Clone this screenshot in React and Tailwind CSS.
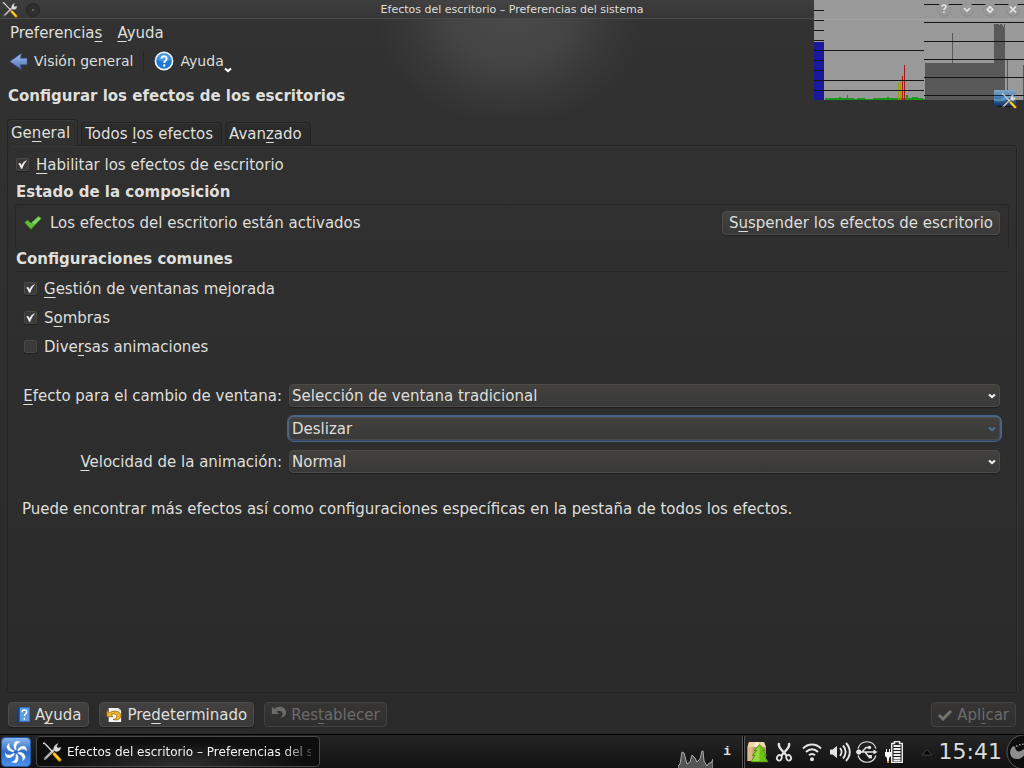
import React from "react";

const U = ({ children }) => (
  <span className="underline decoration-1 underline-offset-3 [text-decoration-skip-ink:none]">{children}</span>
);

const buttonFace =
  "flex items-center rounded-[4px] border border-[#4d4c4b] bg-linear-to-b from-[#42413f] to-[#393939] shadow-[0_1px_1px_rgba(0,0,0,0.35)]";
const buttonOff =
  "flex items-center rounded-[4px] border border-[#434241] bg-linear-to-b from-[#363534] to-[#302f2f] text-[#6b6b6a]";

function Tools({ className }) {
  return (
    <svg viewBox="0 0 20 20" className={className} aria-hidden="true">
      <path d="M3 16.6 12.3 7.3" stroke="#2b2b2b" strokeWidth="3.4" strokeLinecap="round" />
      <path d="M3 16.8 12.5 7.4" stroke="#b9b9b9" strokeWidth="2.2" strokeLinecap="round" />
      <path d="M12.2 8.6c-1.300-3 .6-6.400 4-7l-1.500 2.600 1.300 1.700 2.800-.8c.2 3.200-2.700 5.200-5.300 4.400z" fill="#dcdcdc" stroke="#777" strokeWidth=".4" />
      <circle cx="3" cy="16.800" r=".8" fill="#555" />
      <path d="M1 1.600 2.200 1l2.500 2.500 6.500 7" fill="none" stroke="#d8d8d8" strokeWidth="1.400" />
      <path d="m12.200 12 5.500 5.900" stroke="#a86c00" strokeWidth="3.600" strokeLinecap="round" />
      <path d="m12.200 12 5.300 5.600" stroke="#ffca17" strokeWidth="2.400" strokeLinecap="round" />
      <path d="m12.600 11.700 4 4.200" stroke="#fff08a" strokeWidth=".6" />
    </svg>
  );
}

function Chevron({ className }) {
  return (
    <svg viewBox="0 0 8 6" className={className} aria-hidden="true">
      <path d="M1 1.500 4 4 7 1.500" fill="none" stroke="currentColor" strokeWidth="2.200" />
    </svg>
  );
}

function Check({ id, defaultChecked, children }) {
  return (
    <div className="flex h-[29px] items-center gap-[7px]">
      <span className="grid size-[13px]">
        <input
          id={id}
          type="checkbox"
          defaultChecked={defaultChecked}
          className="peer col-start-1 row-start-1 size-[13px] appearance-none rounded-[2px] border border-[#4a4947] bg-[#3b3a39] shadow-[0_1px_1px_rgba(0,0,0,0.4)]"
        />
        <svg viewBox="0 0 13 13" className="pointer-events-none invisible z-10 col-start-1 row-start-1 size-[13px] peer-checked:visible" aria-hidden="true">
          <path d="M2.300 5.600 4.300 5l1.300 2.300C6.600 5 8 3.300 10.600 2.200l.2.600C8.600 5 7.300 7.600 6.300 10.800H5C4.400 8.800 3.500 7 2.300 5.600z" fill="#f1f1ef" />
        </svg>
      </span>
      <label htmlFor={id}>{children}</label>
    </div>
  );
}

function Combo({ id, options, focused }) {
  return (
    <div className={focused ? "relative rounded-[5px] ring-2 ring-[#48668c]" : "relative"}>
      <select
        id={id}
        aria-label={focused ? "Efecto para el cambio de escritorio" : undefined}
        className="block h-[23px] w-full appearance-none rounded-[4px] border border-[#4b4a49] bg-linear-to-b from-[#42413e] to-[#393939] pl-[2px] leading-5 shadow-[0_1px_1px_rgba(0,0,0,0.35)] outline-none"
      >
        {options.map((o) => (
          <option key={o}>{o}</option>
        ))}
      </select>
      <Chevron
        className={
          focused
            ? "pointer-events-none absolute top-[9px] right-1 h-[6px] w-2 text-[#4d6f9b]"
            : "pointer-events-none absolute top-[9px] right-1 h-[6px] w-2 text-[#f1f1ef]"
        }
      />
    </div>
  );
}

const winGlyphs = [
  ["Ayuda contextual", "M7 6.500c0-2 4-2 4 .2 0 1.500-2 1.500-2 3.200M9 11.500v1.500"],
  ["Minimizar", "m6 8 3 3 3-3"],
  ["Maximizar", "m9 6.800 2.700 2.700L9 12.200 6.300 9.500z"],
  ["Cerrar", "m6 6.500 6 6m0-6-6 6"],
];

function LoadOverlay() {
  return (
    <svg viewBox="0 0 210 109" className="pointer-events-none absolute top-0 right-0 h-[109px] w-[210px]" shapeRendering="crispEdges" aria-hidden="true">
      <defs>
        <linearGradient id="screen" x1="0" y1="0" x2="0" y2="1">
          <stop offset="0" stopColor="#86a9c6" />
          <stop offset=".5" stopColor="#3c78ae" />
          <stop offset="1" stopColor="#0f2f66" />
        </linearGradient>
      </defs>
      <rect width="210" height="100" fill="#999" />
      <path d="M0 19.500H210" stroke="#a6a6a6" />
      <rect y="42" width="10" height="58" fill="#191999" />
      <path d="M0 10.500h10M0 20.500h10M0 30.500h10M0 40.500h10M0 60.500h10M0 70.500h10" stroke="#151515" />
      <path d="M11 98h14v-1h2v1h6v-3h1v3h6v1h3v-1h8v1h8v-1h14v-1h2v1h17v-3h2v3h4v-1h6v1h5v1h13v-1h4v2H11z" fill="#199919" />
      <path d="M84 83h1v17h-1zM86 82h1v18h-1z" fill="#999919" />
      <path d="M88 76h1v24h-1zM90 65h1v35h-1z" fill="#a91515" />
      <path d="M111 63h69V24h5v1h1v-1h2v1h1v2h1v-3h1v76h-80z" fill="#595959" />
      <path d="M138.500 33v30M193.500 60v40M209.500 65v35" stroke="#595959" />
      <path d="M0 50.500h110M0 80.500h110M0 90.500h110M110 4.500h100M110 22.500h100M110 41.500h100M110 59.500h100M110 77.500h100M110 95.500h100" stroke="#151515" />
      <rect x="180" y="90" width="22" height="16" fill="url(#screen)" />
      <path d="M183 106h16v1h-16z" fill="#101820" />
      <path d="M180 98c6 3 12-2 22-4v4c-8 1-14 5-22 3z" fill="#9fc4e2" opacity=".4" />
      <path d="M180 95.500h22" stroke="#1b2a3c" />
    </svg>
  );
}

function Tray() {
  return (
    <div className="flex items-center text-[#e4e4e4]">
      <svg viewBox="0 0 35 30" className="mt-[4px] h-[30px] w-[35px]" aria-label="Monitor">
        <path d="M0 27 2 25 4 13l2 1 3 11 3-2 2-7 3 3 2 4 3-3 2-8h1l1 10 3 5 2-3 2 0 2-4v12H0z" fill="#555" stroke="#aaa" strokeWidth="1" />
      </svg>
      <span className="w-[29px] text-center font-['Liberation_Mono','DejaVu_Sans_Mono',monospace] text-[13px] font-bold">i</span>
      <span className="h-8 w-[3px] border-x border-[#555] bg-black" />
      <svg viewBox="0 0 22 22" className="ml-[2px] size-[22px]" aria-label="Paquetes">
        <path d="M.5 6 2 1h15l2 5v14H.5z" fill="#c09a68" />
        <path d="M.5 6 2 1h15l2 5z" fill="#ecd3a8" />
        <path d="M8 1h3l1 5H7z" fill="#f8ecd2" />
        <path d="M.5 6h5v14h-5z" fill="#dcb888" />
        <path d="m12.500 3.500-5.500 6h2.300l-4 5h2.500l-4 6.500h17.400l-4-6.500h2.600l-4-5h2.200z" fill="#6cc016" stroke="#3f7a0c" strokeWidth=".6" />
        <path d="M12.500 5v15H5.300l3.500-6H6.900l4-5H8.800z" fill="#b8ec5a" opacity=".6" />
      </svg>
      <svg viewBox="0 0 18 20" className="ml-[6px] h-5 w-[18px]" fill="none" stroke="currentColor" aria-label="Portapapeles">
        <path d="M4 1c-.6 2.500.3 4.500 2 6.300l5.600 6.200M14 1c.6 2.500-.3 4.500-2 6.300l-5.600 6.200" strokeWidth="2.300" />
        <ellipse cx="4.300" cy="15.800" rx="2.300" ry="2.800" strokeWidth="1.800" transform="rotate(25 4.300 15.800)" />
        <ellipse cx="13.700" cy="15.800" rx="2.300" ry="2.800" strokeWidth="1.800" transform="rotate(-25 13.700 15.800)" />
      </svg>
      <svg viewBox="0 0 22 20" className="ml-2 h-5 w-[22px]" fill="none" stroke="currentColor" strokeWidth="2" aria-label="Red">
        <path d="M2 6.500C7 1.200 15 1.200 20 6.500" />
        <path d="M5 10C8.500 6.200 13.500 6.200 17 10" />
        <path d="M8 13.300c1.800-1.900 4.200-1.900 6 0" />
        <circle cx="11" cy="17.200" r="2" fill="currentColor" stroke="none" />
      </svg>
      <svg viewBox="0 0 22 22" className="ml-[6px] size-[22px]" fill="none" stroke="currentColor" strokeWidth="1.900" aria-label="Volumen">
        <path d="M1 8.500h2.500L8 5v12l-4.500-3.500H1z" fill="currentColor" stroke="none" />
        <path d="M11 7c2 2.300 2 5.700 0 8M14 4.500c3.500 3.800 3.500 9.200 0 13M17 2c5 5.500 5 12.500 0 18" />
      </svg>
      <svg viewBox="0 0 22 22" className="ml-[5px] size-[22px]" fill="none" stroke="currentColor" aria-label="Dispositivos">
        <path d="M2 7.500C5-1.500 17-1.500 20 7.500M2 14.500C5 23.500 17 23.500 20 14.500" strokeWidth="1.200" />
        <path d="M2 11h16M6 11l4-4.500h3M9 11l3.500 4.500h2" strokeWidth="1.500" />
        <circle cx="2.800" cy="11" r="2.200" fill="currentColor" />
        <path d="m17.500 8.500 4 2.500-4 2.500z" fill="currentColor" stroke="none" />
        <circle cx="13.500" cy="6.500" r="1.700" fill="currentColor" stroke="none" />
        <path d="M12.500 14h3.400v3.400h-3.400z" fill="currentColor" stroke="none" />
      </svg>
      <svg viewBox="0 0 18 22" className="ml-[7px] h-[22px] w-[18px]" aria-label="Batería">
        <path d="M9.500.5h5v2h2.800v19H6.700v-19h2.800z" fill="#1c1c1c" stroke="#ececec" strokeWidth="1.500" />
        <path d="M8.500 5h7M8.500 8h7M8.500 11h7M8.500 14h7M8.500 17h7M8.500 19.500h7" stroke="#ececec" strokeWidth="1.800" />
        <path d="M0 11h1V8h1v3h2V8h1v3h1v4l-2 2v3H2v-3l-2-2z" fill="#f5f5f5" />
        <path d="M2 20h2v2H2z" fill="#e58a1f" />
      </svg>
      <button aria-label="Mostrar iconos ocultos" className="ml-[18px] h-8 w-3">
        <svg viewBox="0 0 12 8" className="h-2 w-3">
          <path d="M1 7 6 1.500 11 7z" fill="#050505" stroke="#4c4c4c" strokeWidth=".8" />
        </svg>
      </button>
      <time className="ml-[6px] text-[22px] leading-8 text-[#dcdcdc]">15:41</time>
      <button aria-label="Herramientas del panel" className="ml-1 h-[34px] w-[18px] overflow-hidden">
        <svg viewBox="0 0 18 34" className="h-[34px] w-[18px]">
          <circle cx="18" cy="17" r="17" fill="#0d0d0d" stroke="#555" />
          <path d="M5.500 13c-3 4-1 11 5 11 4 0 7-2 9-6l-2-4c-2 2-5 3.500-7 1.500s-.500-3.500-2-4-2.500.500-3 1.500z" fill="#8d8d8d" />
          <path d="M10 11h1.500M13 9.700h1.500M16 9.200h1.500" stroke="#999" strokeWidth="1.600" />
        </svg>
      </button>
    </div>
  );
}

export default function App() {
  return (
    <div className="relative flex min-h-screen flex-col overflow-hidden bg-linear-to-b from-[#323232] via-[#2e2e2e] to-[#2a2a2a] font-['DejaVu_Sans',sans-serif] text-[15px] leading-5 text-[#dfdfdc]">
      <header className="flex flex-col bg-[radial-gradient(ellipse_135px_115px_at_510px_12px,#4b4a4a_0%,#454444_45%,#383838_75%,transparent_100%)]">
        <div className="flex h-[19px] items-center border-b border-[#4a4a4a] bg-linear-to-b from-[#434242]/70 to-[#383838]/70 px-[2px] pt-[2px]">
          <Tools className="size-4" />
          <svg viewBox="0 0 16 16" className="ml-[7px] size-4" aria-hidden="true">
            <circle cx="8" cy="8" r="6.500" fill="#2f2f2f" stroke="#252525" />
            <circle cx="8" cy="8" r="1" fill="#777" />
          </svg>
          <h1 className="flex-1 text-center text-[11px]">Efectos del escritorio – Preferencias del sistema</h1>
          <span className="w-[39px]" />
        </div>
        <nav className="flex h-[27px] items-center gap-[15px] px-[10px]">
          <button>Preferencia<U>s</U></button>
          <button><U>A</U>yuda</button>
        </nav>
        <div className="flex h-[30px] items-center px-[9px] text-[14px]">
          <button className="flex items-center gap-[6px]">
            <svg viewBox="0 0 20 20" className="size-[19px]" aria-hidden="true">
              <defs>
                <linearGradient id="back" x1="0" y1="0" x2="0" y2="1">
                  <stop offset="0" stopColor="#a9c0ea" />
                  <stop offset="1" stopColor="#4a6fb4" />
                </linearGradient>
              </defs>
              <path d="M.8 10 13 1.500 12 6.500h7v7h-7l1 5z" fill="url(#back)" stroke="#35548c" strokeWidth=".7" />
            </svg>
            Visión general
          </button>
          <span className="mx-[10px] h-5 w-px bg-[#252525]" />
          <button className="flex items-center gap-[6px]">
            <svg viewBox="0 0 20 20" className="size-5" aria-hidden="true">
              <circle cx="10" cy="10" r="8.600" fill="#1d78d0" stroke="#f2f5f8" strokeWidth="1.600" />
              <path d="M3 9a7 7 0 0 1 14 0q-7 3-14 0z" fill="#5aa9ec" opacity=".6" />
              <path d="M7.500 7.700c.2-3.300 5.300-3.100 5.200 0-.1 1.800-2.500 1.900-2.500 4.300" fill="none" stroke="#fff" strokeWidth="2" />
              <circle cx="10.200" cy="14.500" r="1.200" fill="#fff" />
            </svg>
            Ayuda
          </button>
          <Chevron className="mt-[18px] h-[6px] w-2 text-white" />
        </div>
        <h2 className="px-2 py-[10px] font-bold">Configurar los efectos de los escritorios</h2>
      </header>

      <main className="flex flex-1 flex-col px-[7px] pt-[3px]">
        <div role="tablist" className="z-10 -mb-px flex items-end gap-[3px]">
          <button role="tab" aria-selected="true" className="h-[27px] rounded-t-[4px] border border-b-0 border-[#232323] bg-[#303030] pr-[7px] pl-[3px] shadow-[inset_0_1px_0_#3a3a3a]"><span>Ge<U>n</U>eral</span></button>
          <button role="tab" aria-selected="false" className="h-6 rounded-t-[4px] border border-[#232323] bg-[#2b2b2b] pr-2 pl-[3px] shadow-[inset_0_1px_0_#353535]">Todos <U>l</U>os efectos</button>
          <button role="tab" aria-selected="false" className="h-6 rounded-t-[4px] border border-[#232323] bg-[#2b2b2b] pr-2 pl-[3px] shadow-[inset_0_1px_0_#353535]">Avan<U>z</U>ado</button>
        </div>
        <section className="flex flex-1 flex-col rounded-[3px] border border-[#232323] px-[7px] pt-1 shadow-[inset_0_1px_0_#363636,1px_0_0_#363636]">
          <div className="pl-px">
            <Check id="enable" defaultChecked><U>H</U>abilitar los efectos de escritorio</Check>
          </div>
          <h3 className="pt-[3px] pb-[2px] pl-px font-bold">Estado de la composición</h3>
          <div className="flex h-[45px] items-start rounded-[4px] border border-b-0 border-[#262626] pt-[6px] pr-2 pl-[7px]">
            <svg viewBox="0 0 20 16" className="mt-1 h-4 w-5" aria-hidden="true">
              <path d="m1.500 7.500 3-2.500 3.500 3 7.500-7 3 2.500L8 14.500z" fill="#62bd3a" stroke="#2f6b18" strokeWidth=".8" />
              <path d="m9 7.500 6.500-5.500 2 1.800L12 9z" fill="#a5df96" opacity=".6" />
            </svg>
            <p className="flex-1 pt-[2px] pl-[7px]">Los efectos del escritorio están activados</p>
            <button className={`${buttonFace} h-6 px-[6px]`}><span>S<U>u</U>spender los efectos de escritorio</span></button>
          </div>
          <h3 className="pb-[2px] pl-px font-bold">Configuraciones comunes</h3>
          <div className="flex flex-1 flex-col rounded-[4px] border-t border-[#262626] pt-[2px] pr-[9px] pl-[7px]">
            <div className="pl-[2px]">
              <Check id="windows" defaultChecked><U>G</U>estión de ventanas mejorada</Check>
              <Check id="shadows" defaultChecked>S<U>o</U>mbras</Check>
              <Check id="anim">Dive<U>r</U>sas animaciones</Check>
            </div>
            <div className="grid grid-cols-[260px_1fr] items-center gap-x-[7px] gap-y-[10px] pt-[23px]">
              <label htmlFor="switch" className="text-right whitespace-nowrap"><U>E</U>fecto para el cambio de ventana:</label>
              <Combo id="switch" options={["Selección de ventana tradicional"]} />
              <span />
              <Combo id="desktop" focused options={["Deslizar"]} />
              <label htmlFor="speed" className="text-right whitespace-nowrap"><U>V</U>elocidad de la animación:</label>
              <Combo id="speed" options={["Normal"]} />
            </div>
            <p className="pt-[26px]">Puede encontrar más efectos así como configuraciones específicas en la pestaña de todos los efectos.</p>
          </div>
        </section>
      </main>

      <footer className="flex items-center gap-[10px] px-2 pt-[9px] pb-[7px]">
        <button className={`${buttonFace} h-[25px] gap-1 px-[7px]`}>
          <svg viewBox="0 0 16 18" className="h-[17px] w-[15px]" aria-hidden="true">
            <path d="M1 1h14v16H1z" fill="#2f6fbe" />
            <path d="M1 1h3v16H1z" fill="#153d7c" />
            <path d="M4 2h10v14H4z" fill="#5c9ce2" />
            <path d="M6.500 6.500c0-3.200 5-3 5-.2 0 2-2.500 2-2.500 4.200M9 12.500v2" fill="none" stroke="#fff" strokeWidth="1.500" />
          </svg>
          <span>A<U>y</U>uda</span>
        </button>
        <button className={`${buttonFace} h-[25px] gap-[5px] px-[6px]`}>
          <svg viewBox="0 0 18 18" className="size-4" aria-hidden="true">
            <path d="M3 1h11l3 3v13H3z" fill="#f4f4f4" />
            <path d="M14 1v3h3z" fill="#bbb" />
            <path d="M1 4v7h7L5.800 8.800C9 6.800 12.500 8 12 11c-.3 1.800-2 2.800-4 3 4 1.500 8.500 0 8.700-4C17 5 9 2.600 3.800 6.600z" fill="#efb52c" stroke="#8c5d08" strokeWidth=".8" />
          </svg>
          <span>Pre<U>d</U>eterminado</span>
        </button>
        <button disabled className={`${buttonOff} h-[25px] gap-1 px-[6px]`}>
          <svg viewBox="0 0 18 18" className="mb-[3px] size-4" aria-hidden="true">
            <path d="M1 2v8h8L6 7.500C9 5.500 13 6.500 13 10c0 2-1 3-3 4.500 4-.5 7-2.500 7-6C17 2.500 9-.5 3.700 4.500z" fill="#6c6c6b" />
          </svg>
          <span>Res<U>t</U>ablecer</span>
        </button>
        <button disabled className={`${buttonOff} ml-auto h-[25px] gap-[5px] px-[6px]`}>
          <svg viewBox="0 0 14 12" className="h-3 w-[14px]" aria-hidden="true">
            <path d="m1 6 4 4 8-8" fill="none" stroke="#737372" strokeWidth="3" />
          </svg>
          <span>Apl<U>i</U>car</span>
        </button>
      </footer>

      <div className="flex h-[34px] items-center justify-between border-t border-black bg-linear-to-b from-[#252525] to-[#121212] pl-px">
        <div className="flex items-center gap-[5px]">
          <button aria-label="Menú de aplicaciones" className="size-[30px]">
            <svg viewBox="0 0 30 30" className="size-[30px]">
              <defs>
                <linearGradient id="kick" x1="0" y1="0" x2="0" y2="1">
                  <stop offset="0" stopColor="#8db8ee" />
                  <stop offset=".5" stopColor="#2d6bc6" />
                  <stop offset="1" stopColor="#4c93ee" />
                </linearGradient>
              </defs>
              <rect x=".5" y=".5" width="29" height="29" rx="4" fill="url(#kick)" stroke="#2458a8" />
              {[0, 60, 120, 180, 240, 300].map((a) => (
                <path key={a} d="M14.300 13.200C11.800 10.600 11.900 6.800 14.500 4.300c1.600-.6 3.800-.4 5.600.9-3.300.1-5.500 2.700-4.600 7.300z" fill="#fff" stroke="#5a92dc" strokeWidth=".3" transform={`rotate(${a} 15 15)`} />
              ))}
            </svg>
          </button>
          <button className="flex h-[31px] w-[284px] items-center gap-[5px] overflow-hidden rounded-[4px] border border-[#4a4a4a] bg-[radial-gradient(ellipse_at_bottom,#303030,#0d0d0d_65%)] pl-[5px] text-[12px] text-[#f2f2f2]">
            <Tools className="size-5 shrink-0" />
            <span className="w-[244px] overflow-hidden text-left whitespace-nowrap mask-[linear-gradient(to_right,#000_88%,transparent_104%)]">Efectos del escritorio – Preferencias del sistema</span>
          </button>
        </div>
        <Tray />
      </div>

      <LoadOverlay />
      <Tools className="pointer-events-none absolute top-[93px] right-[7px] size-4" />
      <div className="absolute top-0 right-[2px] flex gap-[5px]">
        {winGlyphs.map(([name, d]) => (
          <button key={name} aria-label={name} className="size-[18px]">
            <svg viewBox="0 0 18 18" className="size-[18px]">
              <circle cx="9" cy="9.800" r="7" fill="#8c8c8c" />
              <circle cx="9" cy="9" r="6.500" fill="#a3a3a3" opacity=".5" />
              <path d={d} fill="none" stroke="#e6e6e6" strokeWidth="1.700" />
            </svg>
          </button>
        ))}
      </div>
    </div>
  );
}
